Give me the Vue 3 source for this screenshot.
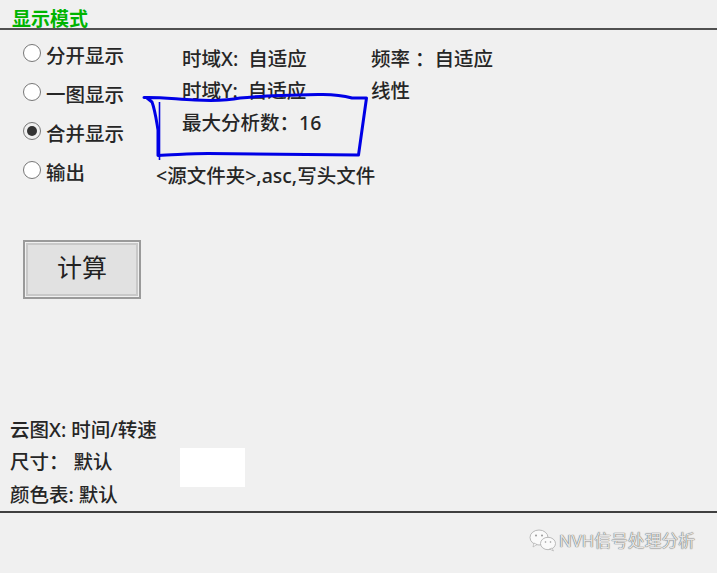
<script setup>
const modes = [
  { label: '分开显示', on: false },
  { label: '一图显示', on: false },
  { label: '合并显示', on: true },
  { label: '输出', on: false },
]
</script>

<template>
  <div class="page">
    <header class="head"><span class="title">显示模式</span></header>
    <div class="panel">
      <div class="top">
        <div class="modes">
          <label v-for="m in modes" :key="m.label" class="mode">
            <span class="radio" :class="{ on: m.on }"></span>
            <span>{{ m.label }}</span>
          </label>
        </div>
        <div class="info">
          <div class="row r1"><span class="c1">时域X:&nbsp; 自适应</span><span>频率 ：自适应</span></div>
          <div class="row r2"><span class="c1">时域Y:&nbsp; 自适应</span><span>线性</span></div>
          <div class="row r3"><span class="c1">最大分析数：16</span></div>
          <div class="row r4">&lt;源文件夹&gt;,asc,写头文件</div>
        </div>
      </div>
      <button class="calc" type="button"><span class="calc-face">计算</span></button>
      <div class="bottom">
        <div class="lines">
          <div class="line">云图X: 时间/转速</div>
          <div class="line">尺寸： 默认</div>
          <div class="line">颜色表: 默认</div>
        </div>
        <div class="swatch"></div>
      </div>
    </div>
    <footer class="foot">
      <svg class="wx" viewBox="0 0 28 24" width="28" height="24">
        <ellipse cx="10" cy="9.5" rx="9" ry="7.5" fill="#fafafa" stroke="#aaa" stroke-width="0.8" />
        <path d="M5 15l-1 4 4-2.5z" fill="#fafafa" stroke="#aaa" stroke-width="0.6" />
        <ellipse cx="19" cy="15.5" rx="7.5" ry="6.2" fill="#fafafa" stroke="#aaa" stroke-width="0.8" />
        <path d="M23 20l1.5 3-4-2z" fill="#fafafa" stroke="#aaa" stroke-width="0.6" />
        <circle cx="7" cy="7.5" r="1" fill="#999" />
        <circle cx="13" cy="7.5" r="1" fill="#999" />
        <circle cx="16.5" cy="14" r="0.8" fill="#999" />
        <circle cx="21.5" cy="14" r="0.8" fill="#999" />
      </svg>
      <span class="mark">NVH信号处理分析</span>
    </footer>
    <svg class="ink" viewBox="0 0 717 573" width="717" height="573">
      <path d="M144 97.5 C160 97 175 99 195 100 C215 101 228 100.5 240 98 C262 95.5 290 95 318 94.5 C335 94 345 96 352 98 L366.500 98 L358.500 155 C320 155 250 153.500 208 153.500 C190 153.500 175 155 158 155.500 L158 130 C156 118 155 110 152 102 L147 98" fill="none" stroke="#0000e6" stroke-width="3" stroke-linejoin="round" stroke-linecap="round" />
      <path d="M159.500 102 L159.500 160" fill="none" stroke="#0000e6" stroke-width="1.600" />
    </svg>
  </div>
</template>

<style scoped>
.page {
  position: relative;
  width: 717px;
  height: 573px;
  overflow: hidden;
  display: flex;
  flex-direction: column;
  background: #f0f0f0;
  color: #262626;
  font-family: "Noto Sans", "Noto Sans CJK SC", sans-serif;
  font-size: 19.500px;
  font-weight: 500;
}
.head {
  height: 28px;
  padding-left: 12px;
  border-bottom: 2px solid #505050;
  box-sizing: content-box;
}
.title {
  display: block;
  color: #00b400;
  font-size: 19px;
  font-weight: 700;
  line-height: 20px;
  padding-top: 9px;
}
.panel {
  flex: 1;
  display: flex;
  flex-direction: column;
  min-height: 0;
}
.top {
  display: flex;
  height: 210px;
  padding: 5px 0 0 23px;
  box-sizing: border-box;
}
.modes {
  width: 133px;
  display: flex;
  flex-direction: column;
}
.mode {
  height: 39px;
  display: flex;
  align-items: center;
  gap: 5px;
}
.radio {
  width: 18px;
  height: 18px;
  margin-top: -3px;
  border: 1.500px solid #777;
  border-radius: 50%;
  background: #fff;
  box-sizing: border-box;
  position: relative;
}
.radio.on {
  background: #f0f0f0;
}
.radio.on::after {
  content: "";
  position: absolute;
  inset: 3px;
  border-radius: 50%;
  background: #333;
}
.info {
  display: flex;
  flex-direction: column;
}
.row {
  display: flex;
  height: 32px;
  align-items: center;
  padding-left: 26px;
  white-space: nowrap;
}
.r1 {
  margin-top: 6px;
}
.c1 {
  width: 189px;
}
.r3 {
  height: 33px;
}
.r4 {
  padding-left: 0;
  margin-top: 21px;
  height: 30px;
}
.calc {
  width: 118px;
  height: 59px;
  margin: 0 0 0 23px;
  padding: 0;
  border: 2px solid #9a9a9a;
  background: #f0f0f0;
  color: #222;
  font-family: inherit;
  font-size: 25px;
  font-weight: 400;
  display: flex;
}
.calc-face {
  flex: 1;
  margin: 1px;
  border: 2px solid #c8c8c8;
  background: #e1e1e1;
  display: flex;
  align-items: center;
  justify-content: center;
  padding-bottom: 7px;
}
.bottom {
  margin-top: 115px;
  flex: 1;
  display: flex;
  padding-left: 10px;
  position: relative;
}
.lines {
  width: 170px;
}
.line {
  height: 32.500px;
  line-height: 32.500px;
  white-space: nowrap;
}
.swatch {
  width: 65px;
  height: 39px;
  margin-top: 34px;
  background: #fff;
}
.foot {
  height: 62px;
  border-top: 2px solid #404040;
  display: flex;
  align-items: center;
  justify-content: flex-end;
  gap: 2px;
  padding: 0 22px 6px 0;
  box-sizing: border-box;
}
.mark {
  color: #e4e4e4;
  font-size: 16.800px;
  font-weight: 400;
  text-shadow: 0 0 1px #666, 0 0 1px #666;
}
.ink {
  position: absolute;
  left: 0;
  top: 0;
  pointer-events: none;
}
</style>
